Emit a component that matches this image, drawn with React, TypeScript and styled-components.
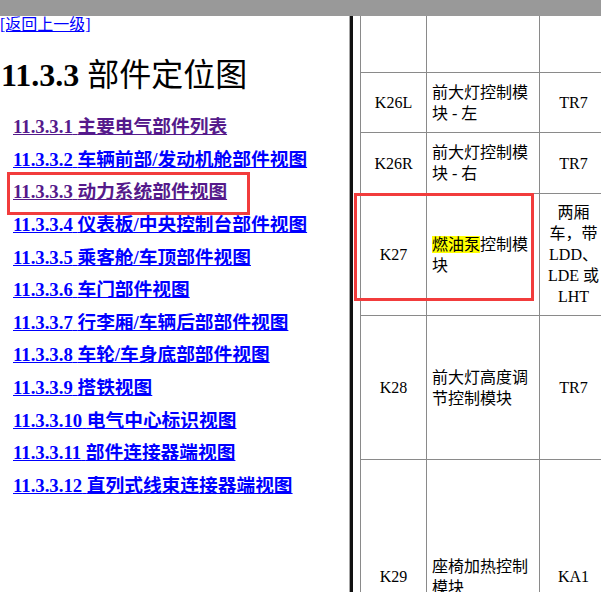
import React from 'react';
import styled, { createGlobalStyle } from 'styled-components';

const GlobalStyle = createGlobalStyle`
  html, body {
    margin: 0;
    padding: 0;
    background: #fff;
  }
  body {
    font-family: "Liberation Serif", "Noto Sans CJK SC", serif;
    color: #000;
  }
`;

const Page = styled.div`
  position: relative;
  width: 601px;
  height: 592px;
  overflow: hidden;
  display: flex;
  flex-direction: column;
`;

const TopBar = styled.div`
  height: 16px;
  flex-shrink: 0;
  background: #999;
`;

const Frames = styled.div`
  flex: 1;
  display: flex;
  min-height: 0;
`;

// left frame: section navigation
const NavPane = styled.div`
  width: 349px;
  flex-shrink: 0;
  overflow: hidden;
`;

const Splitter = styled.div`
  width: 3px;
  flex-shrink: 0;
  border-left: 1px solid #a6a6a6;
  background: #111;
`;

// right frame: parts table
const ContentPane = styled.div`
  flex: 1;
  overflow: hidden;
  padding-left: 7px;
`;

const BackLink = styled.a`
  display: block;
  width: max-content;
  font-size: 16px;
  line-height: 17px;
  color: #00f;
  text-decoration: underline;
`;

const Title = styled.h1`
  margin: 22px 0 0 1px;
  font-size: 32px;
  line-height: 40px;
  font-weight: 700;
  white-space: nowrap;
`;

const TitleText = styled.span`
  font-weight: 400;
`;

const NavList = styled.div`
  margin-top: 16px;
  padding-left: 13px;
  display: flex;
  flex-direction: column;
`;

const NavLink = styled.a<{ $visited?: boolean }>`
  display: block;
  width: max-content;
  font-size: 18.72px;
  line-height: 32.64px;
  font-weight: 700;
  white-space: nowrap;
  color: ${p => (p.$visited ? '#551a8b' : '#00f')};
  text-decoration: underline;
`;

const PartsGrid = styled.div`
  display: grid;
  grid-template-columns: 67px 113px 68px 120px;
  grid-template-rows: 57px 60px 61px 122px 144px 234px;
  width: max-content;
  font-size: 16px;
  line-height: 21px;
`;

const Cell = styled.div<{ $align?: 'left' | 'center'; $first?: boolean }>`
  box-sizing: border-box;
  display: flex;
  align-items: center;
  justify-content: ${p => (p.$align === 'left' ? 'flex-start' : 'center')};
  text-align: ${p => (p.$align === 'left' ? 'left' : 'center')};
  padding: 0 5px;
  border-right: 1px solid #8a8a8a;
  border-bottom: 1px solid #8a8a8a;
  border-left: ${p => (p.$first ? '1px solid #8a8a8a' : 'none')};
`;

const CellText = styled.div`
  min-width: 0;
`;

// yellow marker band kept to the glyph height, not the full font box
const Highlight = styled.span`
  background: linear-gradient(#ff0, #ff0) no-repeat;
  background-size: 100% 17px;
  background-position: 0 62%;
`;

const Callout = styled.div<{ $x: number; $y: number; $w: number; $h: number }>`
  position: absolute;
  left: ${p => p.$x}px;
  top: ${p => p.$y}px;
  width: ${p => p.$w}px;
  height: ${p => p.$h}px;
  box-sizing: border-box;
  border: 3px solid #f23c3c;
  pointer-events: none;
`;

const sections = [
  { no: '11.3.3.1', name: '主要电气部件列表', visited: true },
  { no: '11.3.3.2', name: '车辆前部/发动机舱部件视图' },
  { no: '11.3.3.3', name: '动力系统部件视图', visited: true },
  { no: '11.3.3.4', name: '仪表板/中央控制台部件视图' },
  { no: '11.3.3.5', name: '乘客舱/车顶部件视图' },
  { no: '11.3.3.6', name: '车门部件视图' },
  { no: '11.3.3.7', name: '行李厢/车辆后部部件视图' },
  { no: '11.3.3.8', name: '车轮/车身底部部件视图' },
  { no: '11.3.3.9', name: '搭铁视图' },
  { no: '11.3.3.10', name: '电气中心标识视图' },
  { no: '11.3.3.11', name: '部件连接器端视图' },
  { no: '11.3.3.12', name: '直列式线束连接器端视图' },
];

type Part = { code: string; name: React.ReactNode; option: React.ReactNode };

const parts: Part[] = [
  { code: '', name: '', option: '' },
  { code: 'K26L', name: '前大灯控制模块 - 左', option: 'TR7' },
  { code: 'K26R', name: '前大灯控制模块 - 右', option: 'TR7' },
  {
    code: 'K27',
    name: (
      <>
        <Highlight>燃油泵</Highlight>控制模块
      </>
    ),
    option: (
      <>
        两厢<br />车，带<br />LDD、<br />LDE 或<br />LHT
      </>
    ),
  },
  { code: 'K28', name: '前大灯高度调节控制模块', option: 'TR7' },
  { code: 'K29', name: '座椅加热控制模块', option: 'KA1' },
];

export default function App() {
  return (
    <Page>
      <GlobalStyle />
      <TopBar />
      <Frames>
        <NavPane>
          <BackLink href="#">[返回上一级]</BackLink>
          <Title>
            11.3.3 <TitleText>部件定位图</TitleText>
          </Title>
          <NavList>
            {sections.map(s => (
              <NavLink key={s.no} href="#" $visited={s.visited}>
                {s.no} {s.name}
              </NavLink>
            ))}
          </NavList>
        </NavPane>
        <Splitter />
        <ContentPane>
          <PartsGrid>
            {parts.map((p, i) => (
              <React.Fragment key={i}>
                <Cell $first>
                  <CellText>{p.code}</CellText>
                </Cell>
                <Cell $align="left">
                  <CellText>{p.name}</CellText>
                </Cell>
                <Cell>
                  <CellText>{p.option}</CellText>
                </Cell>
                <Cell />
              </React.Fragment>
            ))}
          </PartsGrid>
        </ContentPane>
      </Frames>
      <Callout $x={7} $y={172} $w={243} $h={43} />
      <Callout $x={354} $y={193} $w={180} $h={108} />
    </Page>
  );
}
